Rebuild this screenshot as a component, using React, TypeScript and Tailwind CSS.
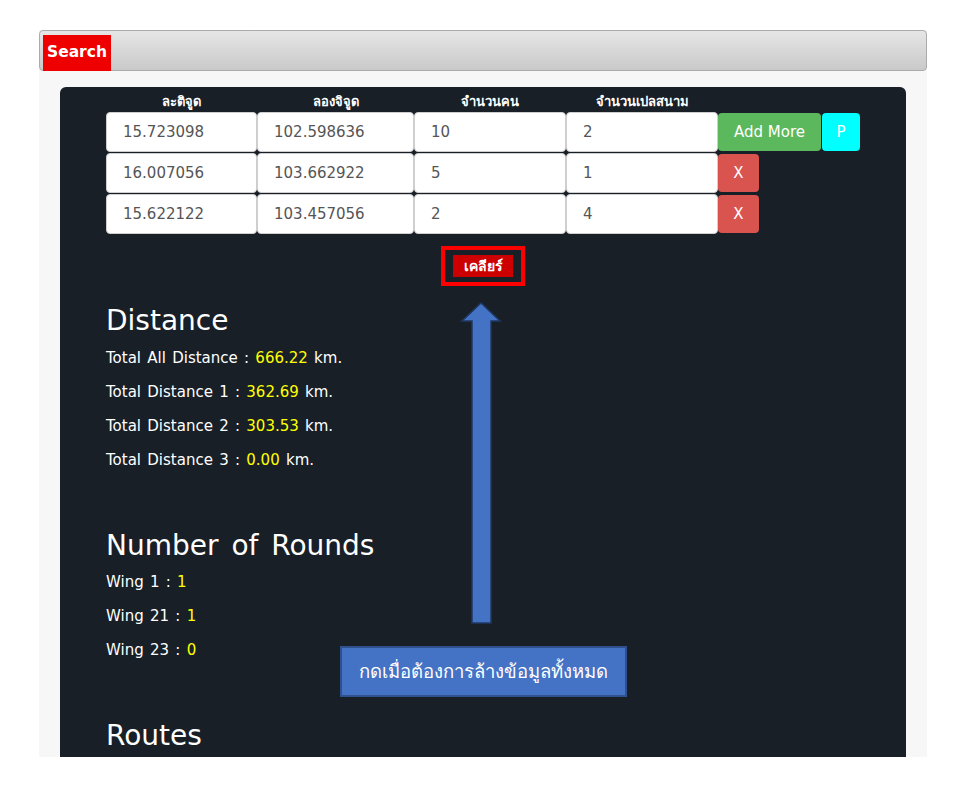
import React from "react"

const rows = [
  { lat: "15.723098", lng: "102.598636", people: "10", fields: "2" },
  { lat: "16.007056", lng: "103.662922", people: "5", fields: "1" },
  { lat: "15.622122", lng: "103.457056", people: "2", fields: "4" },
]

const font = { fontFamily: '"DejaVu Sans", Verdana, "Noto Sans", sans-serif' }

function Cell({ value, w }: { value: string; w: string }) {
  return (
    <div className={`${w} h-[40px] bg-white rounded-[4px] border border-[#cfcfcf] flex items-center pl-4 text-[15px] text-[#555]`}>
      {value}
    </div>
  )
}

export default function App() {
  return (
    <div className="min-h-[794px] bg-white pt-[30px]" style={font}>
      <div className="ml-[39px] w-[888px] h-[727px] bg-[#f7f7f7] overflow-hidden">
        {/* top bar */}
        <div className="h-[41px] rounded-[4px] border border-[#ababab] bg-gradient-to-b from-[#e6e6e6] to-[#c9c9c9] pl-[3px] pt-[4px] flex">
          <div className="w-[68px] h-[36px] bg-[#ee0000] text-white font-bold text-[15.5px] flex items-center justify-center">
            Search
          </div>
        </div>

        {/* dark panel */}
        <div className="relative mx-[21px] mt-[16px] h-[670px] bg-[#181f27] rounded-t-[6px] pl-[46px]">
          <div className="flex pt-[5px] h-[25px] text-white text-[13px] font-bold">
            <div className="w-[151px] text-center">ละติจูด</div>
            <div className="w-[157px] text-center">ลองจิจูด</div>
            <div className="w-[152px] text-center">จำนวนคน</div>
            <div className="w-[152px] text-center">จำนวนเปลสนาม</div>
          </div>

          <div className="flex flex-col gap-[1px]">
            {rows.map((r, i) => (
              <div key={i} className="flex">
                <Cell value={r.lat} w="w-[151px]" />
                <Cell value={r.lng} w="w-[157px]" />
                <Cell value={r.people} w="w-[152px]" />
                <Cell value={r.fields} w="w-[152px]" />
                {i === 0 ? (
                  <div className="flex gap-[1px] items-center">
                    <button className="w-[103px] h-[38px] bg-[#5cb85c] text-white text-[15px] rounded-[4px]">Add More</button>
                    <button className="w-[38px] h-[38px] bg-[#00ffff] text-white text-[15px] rounded-[4px]">P</button>
                  </div>
                ) : (
                  <div className="flex items-center">
                    <button className="w-[41px] h-[38px] bg-[#d9534f] text-white text-[15px] rounded-[4px]">X</button>
                  </div>
                )}
              </div>
            ))}
          </div>

          <div className="flex justify-center mt-[12px] pr-[46px]">
            <div className="w-[84px] h-[40px] border-[4px] border-[#ff0000] flex items-center justify-center">
              <button className="w-[60px] h-[22px] bg-[#cc0000] text-white font-bold text-[14px] leading-none">เคลียร์</button>
            </div>
          </div>

          <h2 className="mt-[18px] text-white text-[28px] leading-[34px] [word-spacing:4px]">Distance</h2>
          <div className="mt-[3px] text-white text-[15px] leading-[34px] [word-spacing:1.5px]">
            <div>Total All Distance : <span className="text-[#ffff00]">666.22</span> km.</div>
            <div>Total Distance 1 : <span className="text-[#ffff00]">362.69</span> km.</div>
            <div>Total Distance 2 : <span className="text-[#ffff00]">303.53</span> km.</div>
            <div>Total Distance 3 : <span className="text-[#ffff00]">0.00</span> km.</div>
          </div>

          <h2 className="mt-[52px] text-white text-[28px] leading-[34px] [word-spacing:4px]">Number of Rounds</h2>
          <div className="mt-[2px] text-white text-[15px] leading-[34px] [word-spacing:1.5px]">
            <div>Wing 1 : <span className="text-[#ffff00]">1</span></div>
            <div>Wing 21 : <span className="text-[#ffff00]">1</span></div>
            <div>Wing 23 : <span className="text-[#ffff00]">0</span></div>
          </div>

          <h2 className="mt-[52px] text-white text-[28px] leading-[34px]">Routes</h2>

          {/* annotation arrow */}
          <svg className="absolute left-[400px] top-[214px]" width="42" height="324" viewBox="0 0 42 324">
            <path d="M21 2 L40 20 L31 20 L31 322 L12 322 L12 20 L2 20 Z" fill="#4472c4" stroke="#1f3864" strokeWidth="1.5" />
          </svg>

          {/* annotation callout */}
          <div className="absolute left-[280px] top-[559px] w-[287px] h-[51px] bg-[#4472c4] border-2 border-[#2f528f] flex items-center justify-center text-white text-[18.5px]">
            กดเมื่อต้องการล้างข้อมูลทั้งหมด
          </div>
        </div>
      </div>
    </div>
  )
}
